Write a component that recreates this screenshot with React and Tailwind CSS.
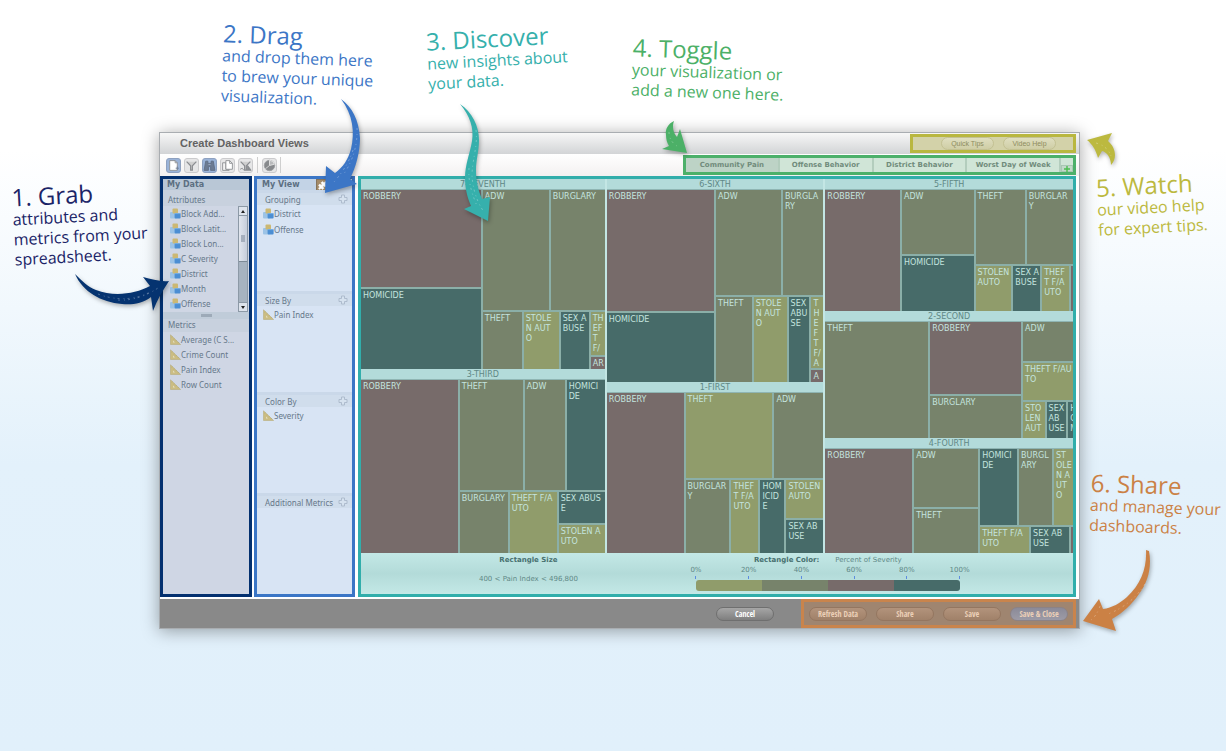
import { Puzzle } from "lucide-react";

const BROWN = "bg-[#776b6a]";
const GREEN = "bg-[#77836b]";
const OLIVE = "bg-[#909c6b]";
const TEAL = "bg-[#476b69]";

const cell = (size, color, label = "") => ({ size, color, label });
const row = (size, ...items) => ({ size, dir: "row", items });
const col = (size, ...items) => ({ size, dir: "col", items });

const columns = [
  {
    size: 244,
    groups: [
      {
        name: "7-SEVENTH",
        tree: row(
          179,
          col(120, cell(97, BROWN, "ROBBERY"), cell(80, TEAL, "HOMICIDE")),
          col(
            122,
            row(120, cell(66, GREEN, "ADW"), cell(54, GREEN, "BURGLARY")),
            row(
              57,
              cell(39, GREEN, "THEFT"),
              cell(35, OLIVE, "STOLE\nN AUT\nO"),
              cell(28, TEAL, "SEX A\nBUSE"),
              col(14, cell(43, OLIVE, "TH\nEF\nT\nF/"), cell(12, BROWN, "AR"))
            )
          )
        ),
      },
      {
        name: "3-THIRD",
        tree: row(
          173,
          cell(97, BROWN, "ROBBERY"),
          col(
            145,
            row(109, cell(63, GREEN, "THEFT"), cell(40, GREEN, "ADW"), cell(38, TEAL, "HOMICI\nDE")),
            row(
              61,
              cell(48, GREEN, "BURGLARY"),
              cell(47, OLIVE, "THEFT F/A\nUTO"),
              col(46, cell(31, TEAL, "SEX ABUS\nE"), cell(28, OLIVE, "STOLEN A\nUTO"))
            )
          )
        ),
      },
    ],
  },
  {
    size: 217,
    groups: [
      {
        name: "6-SIXTH",
        tree: row(
          193,
          col(108, cell(121, BROWN, "ROBBERY"), cell(70, TEAL, "HOMICIDE")),
          col(
            108,
            row(105, cell(66, GREEN, "ADW"), cell(41, GREEN, "BURGLA\nRY")),
            row(
              85,
              cell(36, GREEN, "THEFT"),
              cell(33, OLIVE, "STOLE\nN AUT\nO"),
              cell(21, TEAL, "SEX\nABU\nSE"),
              col(12, cell(71, OLIVE, "T\nH\nE\nF\nT\nF/\nA"), cell(12, BROWN, "A"))
            )
          )
        ),
      },
      {
        name: "1-FIRST",
        tree: row(
          160,
          cell(77, BROWN, "ROBBERY"),
          col(
            138,
            row(84, cell(87, OLIVE, "THEFT"), cell(49, GREEN, "ADW")),
            row(
              73,
              cell(44, GREEN, "BURGLAR\nY"),
              cell(27, OLIVE, "THEF\nT F/A\nUTO"),
              cell(24, TEAL, "HOM\nICID\nE"),
              col(37, cell(38, OLIVE, "STOLEN\nAUTO"), cell(33, TEAL, "SEX AB\nUSE"))
            )
          )
        ),
      },
    ],
  },
  {
    size: 248,
    groups: [
      {
        name: "5-FIFTH",
        tree: row(
          121,
          cell(75, BROWN, "ROBBERY"),
          col(72, cell(63, GREEN, "ADW"), cell(55, TEAL, "HOMICIDE")),
          col(
            98,
            row(73, cell(50, GREEN, "THEFT"), cell(47, GREEN, "BURGLAR\nY")),
            row(
              45,
              cell(36, OLIVE, "STOLEN\nAUTO"),
              cell(27, TEAL, "SEX A\nBUSE"),
              cell(27, OLIVE, "THEF\nT F/A\nUTO"),
              cell(2, BROWN)
            )
          )
        ),
      },
      {
        name: "2-SECOND",
        tree: row(
          116,
          cell(103, GREEN, "THEFT"),
          col(91, cell(72, BROWN, "ROBBERY"), cell(42, GREEN, "BURGLARY")),
          col(
            50,
            cell(39, GREEN, "ADW"),
            cell(38, OLIVE, "THEFT F/AU\nTO"),
            row(36, cell(22, OLIVE, "STO\nLEN\nAUT"), cell(20, TEAL, "SEX\nAB\nUSE"), cell(5, TEAL, "H\nO\nM"))
          )
        ),
      },
      {
        name: "4-FOURTH",
        tree: row(
          104,
          cell(87, BROWN, "ROBBERY"),
          col(64, cell(57, GREEN, "ADW"), cell(44, GREEN, "THEFT")),
          col(
            93,
            row(77, cell(37, TEAL, "HOMICI\nDE"), cell(33, GREEN, "BURGL\nARY"), cell(19, OLIVE, "ST\nOLE\nN A\nUT\nO")),
            row(26, cell(49, OLIVE, "THEFT F/A\nUTO"), cell(38, TEAL, "SEX AB\nUSE"), cell(2, BROWN))
          )
        ),
      },
    ],
  },
];

const grow = (size) => ({ flexGrow: size });

function Node({ node }) {
  if (node.items) {
    return (
      <div
        className={`flex min-h-0 min-w-0 shrink basis-0 gap-0.5 ${node.dir === "row" ? "flex-row" : "flex-col"}`}
        style={grow(node.size)}
      >
        {node.items.map((n, i) => (
          <Node key={i} node={n} />
        ))}
      </div>
    );
  }
  return (
    <div className={`min-h-0 min-w-0 shrink basis-0 overflow-hidden ${node.color}`} style={grow(node.size)}>
      <p className="pt-0.5 pl-0.5 text-[8px] leading-[10px] font-medium whitespace-pre text-[#c4e4df]">{node.label}</p>
    </div>
  );
}

function Treemap() {
  return (
    <div className="flex h-[374px] gap-0.5 bg-[#c3e6e4] font-['DejaVu_Sans',sans-serif]">
      {columns.map((c) => (
        <div key={c.size} className="flex min-w-0 shrink basis-0 flex-col" style={grow(c.size)}>
          {c.groups.map((g) => (
            <section key={g.name} className="flex min-h-0 shrink basis-0 flex-col" style={grow(g.tree.size + 11)}>
              <h3 className="h-[11px] shrink-0 border-b border-[#8fb5b3] bg-[#b3dbda] text-center text-[8px] leading-[11px] text-[#5f8886]">
                {g.name}
              </h3>
              <div className="flex min-h-0 flex-1 bg-[#8bafa8]">
                <Node node={g.tree} />
              </div>
            </section>
          ))}
        </div>
      ))}
    </div>
  );
}

function Legend() {
  return (
    <div className="flex h-[41px] bg-linear-to-b from-[#c3e8e6] via-[#b3dbd9] to-[#c3e8e6] font-['DejaVu_Sans',sans-serif] text-[7px] leading-[8px] text-[#5f8886]">
      <div className="flex shrink grow-[334] basis-0 flex-col items-center gap-[11px] pt-[3px]">
        <strong className="text-[#47706f]">Rectangle Size</strong>
        <span>400 &lt; Pain Index &lt; 496,800</span>
      </div>
      <div className="shrink grow-[263] basis-0 pt-[3px]">
        <div className="flex justify-center gap-4">
          <strong className="text-[#47706f]">Rectangle Color:</strong>
          <span>Percent of Severity</span>
        </div>
        <div className="mt-0.5 flex justify-between">
          {["0%", "20%", "40%", "60%", "80%", "100%"].map((t) => (
            <span key={t} className="flex w-0 flex-col items-center">
              <span>{t}</span>
              <i className="mt-0.5 h-[3px] w-px bg-[#5d8ce0]" />
            </span>
          ))}
        </div>
        <div className="mt-px flex h-[11px] overflow-hidden rounded-[3px]">
          <i className="flex-1 bg-[#909c6b]" />
          <i className="flex-1 bg-[#77836b]" />
          <i className="flex-1 bg-[#776b6a]" />
          <i className="flex-1 bg-[#476b69]" />
        </div>
      </div>
      <div className="shrink grow-[113] basis-0" />
    </div>
  );
}

function CubesIcon() {
  return (
    <svg viewBox="0 0 11 11" className="size-[11px] shrink-0" aria-hidden="true">
      <rect x="0" y="4" width="7" height="6.5" rx="1" fill="#9cc3e6" />
      <rect x="2.5" y="0.5" width="5.5" height="5" rx="1" fill="#cbb874" />
      <rect x="4.6" y="5" width="6" height="5.6" rx="1" fill="#4b8ed3" />
      <path d="M5 5.6h5.2" stroke="#86b7e6" strokeWidth=".8" />
    </svg>
  );
}

function RulerIcon() {
  return (
    <svg viewBox="0 0 11 11" className="size-[11px] shrink-0" aria-hidden="true">
      <path d="M.5.8 10.6 10.5H.5Z" fill="#cbbd83" stroke="#b3a671" strokeWidth=".5" />
      <path d="M3 6.6v1.8h1.9Z" fill="#e3dfc6" />
      <path d="M2.4 2.6l-.7.7M4.4 4.5l-.7.7M6.4 6.4l-.7.7M8.4 8.4l-.7.7" stroke="#a39664" strokeWidth=".5" />
    </svg>
  );
}

function PlusIcon() {
  return (
    <svg viewBox="0 0 10 10" className="size-[10px]" aria-hidden="true">
      <path d="M3.5 1h3v2.5H9v3H6.5V9h-3V6.5H1v-3h2.5Z" fill="#d6e2ef" stroke="#a9b8c9" strokeWidth=".9" />
    </svg>
  );
}

function FieldList({ items, Icon, pitch = "h-[15px]" }) {
  return (
    <ul>
      {items.map((t) => (
        <li key={t} className={`flex items-center whitespace-nowrap ${pitch}`}>
          <Icon />
          {t}
        </li>
      ))}
    </ul>
  );
}

function ScrollBar() {
  return (
    <div className="flex w-[10px] flex-col border border-[#8c99a6] bg-[#a7b3c0]" aria-hidden="true">
      <i className="flex h-[9px] items-center justify-center border-b border-[#8c99a6] bg-[#dde3ec]">
        <svg viewBox="0 0 4 3" className="h-[3px] w-1"><path d="M2 0l2 3H0Z" fill="#222" /></svg>
      </i>
      <i className="flex h-[46px] items-center justify-center border-b border-[#7c8995] bg-linear-to-r from-[#e1e6ee] to-[#c6cedb]">
        <span className="h-[7px] w-[4px] bg-[#a5afbd]" />
      </i>
      <span className="flex-1" />
      <i className="flex h-[9px] items-center justify-center border-t border-[#8c99a6] bg-[#dde3ec]">
        <svg viewBox="0 0 4 3" className="h-[3px] w-1"><path d="M2 3l2-3H0Z" fill="#222" /></svg>
      </i>
    </div>
  );
}

const panelText = "font-['Noto_Sans',sans-serif] text-[8px] leading-[11px] text-[#66788a]";

function MyData() {
  return (
    <aside className={`flex w-[92px] shrink-0 flex-col border-3 border-[#03306f] bg-[#cfd6e4] ${panelText}`}>
      <h2 className="h-[11px] bg-[#b9c7d6] pl-1 font-['DejaVu_Sans',sans-serif] text-[8px] font-bold text-[#5c6f82]">My Data</h2>
      <h3 className="h-4 bg-[#c8d1de] pt-1 pl-[5px]">Attributes</h3>
      <div className="flex h-[106px] justify-between pr-px">
        <div className="pl-[7px]">
          <FieldList Icon={CubesIcon} items={["Block Add...", "Block Latit...", "Block Lon...", "C Severity", "District", "Month", "Offense"]} />
        </div>
        <ScrollBar />
      </div>
      <div className="flex h-[7px] items-center justify-center bg-[#c0ccd9]">
        <i className="h-[3px] w-[11px] bg-[#9daab8]" />
      </div>
      <h3 className="h-[13px] bg-[#c8d1de] pl-[5px]">Metrics</h3>
      <div className="pl-[7px]">
        <FieldList Icon={RulerIcon} items={["Average (C S...", "Crime Count", "Pain Index", "Row Count"]} />
      </div>
    </aside>
  );
}

const sections = [
  { title: "Grouping", items: ["District", "Offense"], Icon: CubesIcon },
  { title: "Size By", items: ["Pain Index"], Icon: RulerIcon },
  { title: "Color By", items: ["Severity"], Icon: RulerIcon },
  { title: "Additional Metrics", items: [], Icon: RulerIcon },
];

function MyView() {
  return (
    <aside className={`flex w-[101px] shrink-0 flex-col border-3 border-[#3b76c6] bg-[#d8e4f4] ${panelText}`}>
      <div className="flex h-[11px] justify-between bg-[#c3d3e6] pr-[24px] pl-[5px]">
        <h2 className="font-['DejaVu_Sans',sans-serif] text-[8px] font-bold text-[#5c6f82]">My View</h2>
        <button aria-label="Visualization type" className="flex size-[12px] items-center justify-center border border-[#86745c] bg-[#a48b69] text-white">
          <Puzzle size={9} fill="currentColor" />
        </button>
      </div>
      {sections.map(({ title, items, Icon }) => (
        <section key={title} className="flex-1">
          <div className="flex h-[15px] items-center justify-between border-t-3 border-[#cad8e9] bg-[#d0ddec] pr-1 pl-2">
            <h3>{title}</h3>
            <button aria-label={`Add to ${title}`}><PlusIcon /></button>
          </div>
          <div className="pl-[6px]">
            <FieldList Icon={Icon} items={items} pitch="h-4" />
          </div>
        </section>
      ))}
    </aside>
  );
}

function ToolIcon({ children }) {
  return (
    <svg viewBox="0 0 12 12" className="size-[13px]" fill="none" stroke="#8a8c90" strokeWidth=".8" aria-hidden="true">
      {children}
    </svg>
  );
}

const funnelPath = "M1.5 2.5 5.2 6.3V10.2h1.6V6.3L10.5 2.5";

function ToolButton({ label, active, children }) {
  return (
    <button
      aria-label={label}
      className={`flex size-[15px] items-center justify-center rounded-[3px] border ${active ? "border-[#8ea1c0] bg-[#9ab3d8]" : "border-[#cbcbcd] bg-[#e6e6e7]"}`}
    >
      <ToolIcon>{children}</ToolIcon>
    </button>
  );
}

const tabs = ["Community Pain", "Offense Behavior", "District Behavior", "Worst Day of Week"];

function TopBars() {
  return (
    <>
      <header className="flex h-[21px] items-center justify-between bg-linear-to-b from-[#f7f7f7] to-[#d2d4d6] pr-[3px] pl-5">
        <h1 className="font-['Liberation_Sans',sans-serif] text-[11px] font-bold text-[#636363]">Create Dashboard Views</h1>
        <div className="flex h-[19px] w-[166px] items-center justify-end gap-[9px] border-3 border-[#b9b740] bg-[#d3d2a9] pr-[17px]">
          {["Quick Tips", "Video Help"].map((t) => (
            <button key={t} className="h-[13px] w-[53px] rounded-full border border-[#c3c193] bg-linear-to-b from-[#dfdec0] to-[#cfcea5] font-['Liberation_Sans',sans-serif] text-[7px] leading-[10px] text-[#8e8c5f]">
              {t}
            </button>
          ))}
        </div>
      </header>
      <div className="flex h-[22px] items-center justify-between bg-linear-to-b from-white to-[#f3f1f1] pr-[3px] pl-1.5">
        <div className="flex items-center gap-[3px]">
          <ToolButton label="New view" active>
            <path d="M2.5 1.5h5l2 2v7h-7Z" fill="#fff" />
            <path d="M7.5 1.5v2h2" />
            <path d="M8 8.5h3M9.5 7v3" stroke="#6f7f98" />
          </ToolButton>
          <ToolButton label="Filter">
            <path d={funnelPath} fill="#cfcfcf" strokeWidth="1.1" />
          </ToolButton>
          <ToolButton label="Find" active>
            <path d="M2.5 2h2v2h3V2h2l1.5 8.5H7V7H5v3.5H1Z" fill="#6c7b93" stroke="#5f6d84" />
            <path d="M5 5h2" stroke="#a3b3cc" />
          </ToolButton>
          <ToolButton label="Copy">
            <path d="M1.5 3.5h3v6h3v1h-6Z" fill="#f4f4f4" />
            <path d="M4.5 1.5h3.5l2.5 2.5v5.5h-6Z" fill="#fff" />
            <path d="M8 1.5v2.5h2.5" />
          </ToolButton>
          <ToolButton label="Clear filter">
            <path d={funnelPath} fill="#cfcfcf" strokeWidth="1.1" />
            <path d="M8 6 7.4 10.4h3.8Z" fill="#8a8c90" />
            <path d="M1 9.5l2-1 1.5 2" />
          </ToolButton>
          <i className="mx-px h-4 w-px bg-[#cfcfcf]" />
          <ToolButton label="Charts">
            <circle cx="6" cy="6" r="4.8" fill="#87898c" stroke="#9b9da0" />
            <path d="M6 6V1.2A4.8 4.8 0 0 1 10.6 4.8Z" fill="#b9babc" stroke="#e8e8e8" />
            <path d="M6 6 2.2 9" stroke="#d8d8d8" />
          </ToolButton>
          <i className="h-4 w-px bg-[#cfcfcf]" />
        </div>
        <nav className="flex h-5 w-[393px] border-3 border-[#4cb06a] bg-[#d0e5d7]">
          {tabs.map((t, i) => (
            <button
              key={t}
              className={`flex-1 border-r-2 border-[#b3cdbd] font-['DejaVu_Sans',sans-serif] text-[7px] font-bold text-[#718c7c] ${i === 0 ? "bg-[#bdd3c6]" : ""}`}
            >
              {t}
            </button>
          ))}
          <button aria-label="Add visualization" className="mt-[7px] flex w-[12px] items-center justify-center border border-[#a8c7b3] bg-[#c2d9ca]">
            <svg viewBox="0 0 6 6" className="size-[6px]"><path d="M3 0v6M0 3h6" stroke="#4bbd50" strokeWidth="1.4" /></svg>
          </button>
        </nav>
      </div>
    </>
  );
}

const footButton = "h-[14px] w-[58px] rounded-full border font-['Liberation_Sans_Narrow','Open_Sans_Condensed','Liberation_Sans',sans-serif] text-[8px] leading-[10px]";

function Footer() {
  return (
    <footer className="mt-0.5 flex h-[29px] items-center justify-end gap-[27px] bg-[#898989] pr-[3px]">
      <button className={`${footButton} border-[#6f6f6f] bg-linear-to-b from-[#a6a6a6] to-[#7f7f7f] font-bold text-white`}>Cancel</button>
      <div className="flex h-[29px] items-center gap-[9px] border-3 border-[#c9844c] bg-[#9f8570] px-[5px]">
        {["Refresh Data", "Share", "Save"].map((t) => (
          <button key={t} className={`${footButton} border-[#947660] bg-linear-to-b from-[#b2937c] to-[#a08169] text-[#ecd0b8]`}>
            {t}
          </button>
        ))}
        <button className={`${footButton} border-[#8b8286] bg-linear-to-b from-[#8b8a98] to-[#9d9ba6] text-[#ecd0b8]`}>Save &amp; Close</button>
      </div>
    </footer>
  );
}

function Callout({ title, lines, className }) {
  return (
    <div className={`absolute font-['Open_Sans',sans-serif] text-[16px] leading-5 whitespace-nowrap ${className}`}>
      <h2 className="text-[24px] leading-6">{title}</h2>
      {lines.map((l) => (
        <p key={l}>{l}</p>
      ))}
    </div>
  );
}

function Arrow({ box, d, marks, className }) {
  return (
    <svg viewBox={box} className={`absolute overflow-visible drop-shadow-[1px_2px_2px_rgba(0,0,0,0.3)] ${className}`} aria-hidden="true">
      <path d={d} fill="currentColor" />
      <path d={marks} fill="none" stroke="#fff" strokeOpacity=".35" strokeWidth=".8" strokeDasharray="2 4 1 3" />
    </svg>
  );
}

export default function App() {
  return (
    <main className="min-h-screen bg-linear-to-b from-white from-20% via-[#e3f1fb] via-62% to-[#e1f0fb] pt-[132px] pr-[146px] pb-10 pl-[159px]">
      <div className="relative">
        <div className="border border-[#a9adb1] bg-white shadow-[0_2px_16px_rgba(0,0,0,0.35)]">
          <TopBars />
          <div className="flex gap-0.5 pr-[3px]">
            <MyData />
            <MyView />
            <section className="ml-px min-w-0 flex-1 border-3 border-[#31aeab]">
              <Treemap />
              <Legend />
            </section>
          </div>
          <Footer />
        </div>

        <Callout title="1. Grab" lines={["attributes and", "metrics from your", "spreadsheet."]} className="top-[50px] -left-[146px] -rotate-3 text-[#1b2467]" />
        <Arrow
          className="top-[142px] -left-[84px] h-[37px] w-[94px] text-[#053370]"
          box="75 274 94 37"
          d="M75 274C82 281 88 287 96 290C114 297 135 294 150 286L143 277C152 279 160 282 169 281C163 290 157 300 153 311L151 297C142 304 131 305 122 304C101 302 83 292 75 274Z"
          marks="M98 294C116 301 136 300 150 292M118 300C132 301 146 296 158 288"
        />

        <Callout title="2. Drag" lines={["and drop them here", "to brew your unique", "visualization."]} className="-top-[108px] left-[63px] rotate-2 text-[#3c76c6]" />
        <Arrow
          className="-top-[33px] left-[166px] h-[94px] w-[35px] text-[#3c76c6]"
          box="325 99 35 94"
          d="M341 99C352 107 359 120 360 138C360 152 356 167 350 179L357 184L325 193L326 166L335 173C343 167 348 160 351 149C355 132 353 115 341 99Z"
          marks="M357 128C358 145 352 163 343 175M353 150C349 163 341 174 334 182"
        />

        <Callout title="3. Discover" lines={["new insights about", "your data."]} className="-top-[106px] left-[268px] -rotate-3 text-[#36b0ac]" />
        <Arrow
          className="-top-[28px] left-[301px] h-[117px] w-[30px] text-[#36b0ac]"
          box="460 104 30 117"
          d="M460 104C472 112 479 126 479 140C479 151 476 160 476 170C476 181 478 190 482 199L490 197L488 221L464 209L471 206C467 197 465 188 465 177C465 165 470 153 472 141C474 128 470 116 460 104Z"
          marks="M476 130C478 146 472 160 472 176C473 190 477 202 484 212M469 168C468 182 472 194 477 206"
        />

        <Callout title="4. Toggle" lines={["your visualization or", "add a new one here."]} className="-top-[94px] right-[296px] rotate-2 text-[#4cb067]" />
        <Arrow
          className="-top-[11px] right-[393px] h-[32px] w-[25px] text-[#4cb067]"
          box="662 121 25 32"
          d="M674 121C668 124 665 129 666 135C666 139 667 143 669 146L662 149L687 153L680 129L677 137C673 133 672 126 674 121Z"
          marks="M669 132C669 138 672 143 677 146"
        />

        <Arrow
          className="top-px left-full ml-[7px] h-[32px] w-[28px] text-[#bcb93f]"
          box="1087 133 28 32"
          d="M1087 140L1112 133L1108 141C1115 147 1118 157 1111 165C1111 158 1107 152 1102 151L1098 158C1096 150 1092 144 1087 140Z"
          marks="M1096 143C1104 145 1109 150 1111 156"
        />
        <Callout title="5. Watch" lines={["our video help", "for expert tips."]} className="top-[41px] left-full ml-[17px] -rotate-3 text-[#bcb93f]" />

        <Callout title="6. Share" lines={["and manage your", "dashboards."]} className="top-[341px] left-full ml-[10px] rotate-2 text-[#cb8145]" />
        <Arrow
          className="top-[418px] left-full ml-[3px] h-[81px] w-[68px] text-[#cb8145]"
          box="1083 550 68 81"
          d="M1146 550L1149 551C1152 567 1148 582 1139 594C1132 604 1123 613 1112 619L1116 631L1083 621L1099 599L1103 609C1112 608 1120 603 1127 597C1141 584 1147 568 1146 550Z"
          marks="M1145 584C1137 597 1124 608 1108 614M1100 606C1098 612 1095 617 1091 620"
        />
      </div>
    </main>
  );
}
